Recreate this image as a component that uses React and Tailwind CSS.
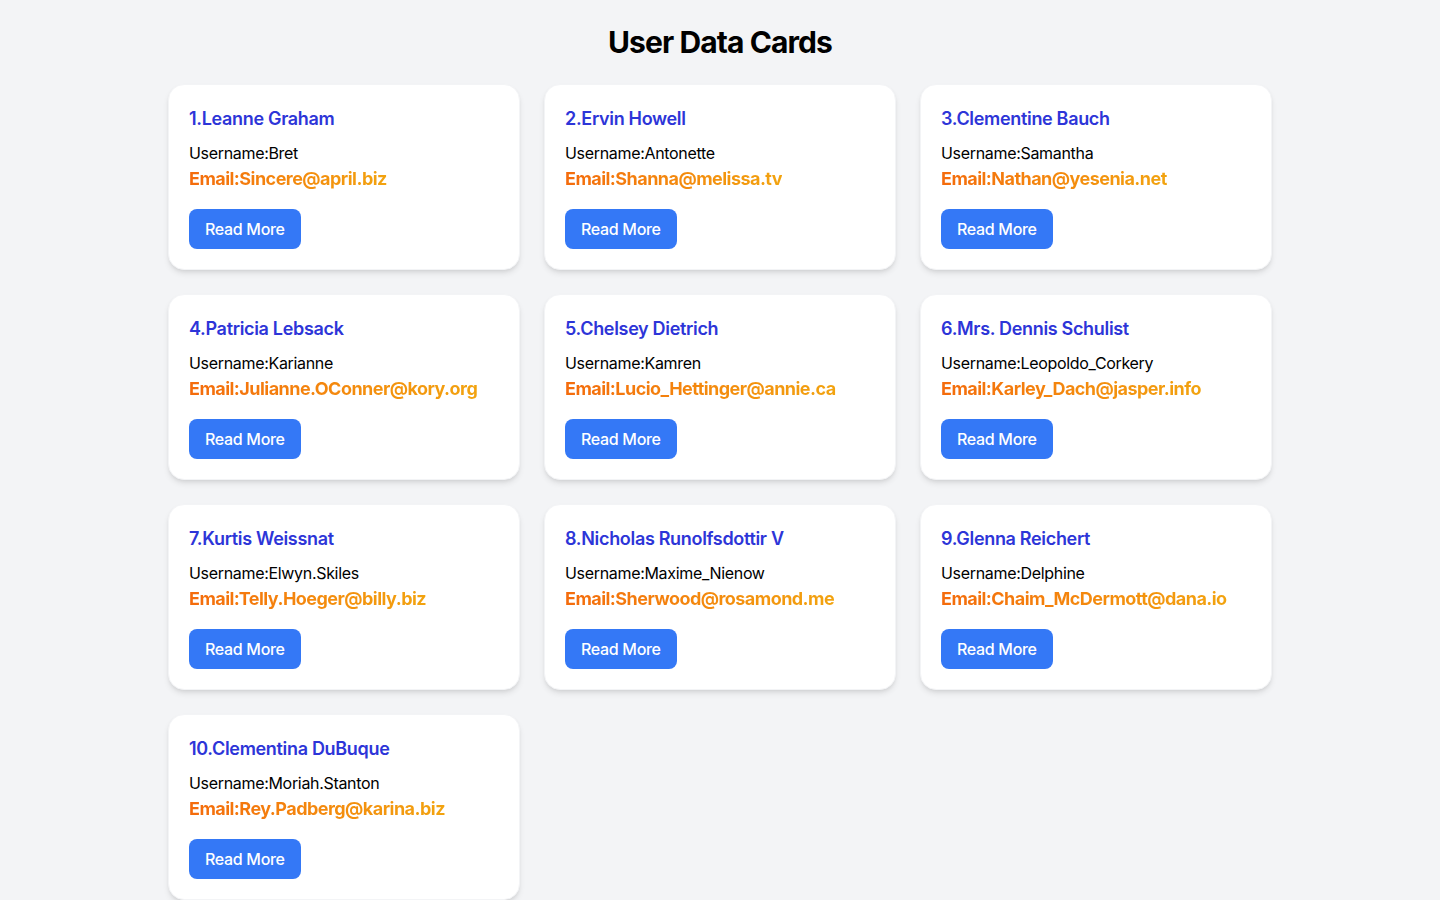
import React from "react";

const users = [
  { id: 1, name: "Leanne Graham", username: "Bret", email: "Sincere@april.biz" },
  { id: 2, name: "Ervin Howell", username: "Antonette", email: "Shanna@melissa.tv" },
  { id: 3, name: "Clementine Bauch", username: "Samantha", email: "Nathan@yesenia.net" },
  { id: 4, name: "Patricia Lebsack", username: "Karianne", email: "Julianne.OConner@kory.org" },
  { id: 5, name: "Chelsey Dietrich", username: "Kamren", email: "Lucio_Hettinger@annie.ca" },
  { id: 6, name: "Mrs. Dennis Schulist", username: "Leopoldo_Corkery", email: "Karley_Dach@jasper.info" },
  { id: 7, name: "Kurtis Weissnat", username: "Elwyn.Skiles", email: "Telly.Hoeger@billy.biz" },
  { id: 8, name: "Nicholas Runolfsdottir V", username: "Maxime_Nienow", email: "Sherwood@rosamond.me" },
  { id: 9, name: "Glenna Reichert", username: "Delphine", email: "Chaim_McDermott@dana.io" },
  { id: 10, name: "Clementina DuBuque", username: "Moriah.Stanton", email: "Rey.Padberg@karina.biz" },
];

function UserCard({ user }) {
  return (
    <div className="bg-white rounded-2xl border border-gray-100 shadow-md p-5">
      <h2 className="text-lg font-semibold text-[#2d35d8] mb-2">
        {user.id}.{user.name}
      </h2>
      <p className="text-base text-black">Username:{user.username}</p>
      <p className="text-lg font-bold tracking-[-0.03em] bg-gradient-to-r from-[#f46b0c] to-[#f2a30f] bg-clip-text text-transparent w-fit">
        Email:{user.email}
      </p>
      <button className="mt-4 bg-[#3478f6] text-white text-base font-medium px-4 py-2 rounded-lg hover:bg-blue-600">
        Read More
      </button>
    </div>
  );
}

export default function App() {
  return (
    <div className="min-h-screen bg-[#f3f4f6] font-['Inter',sans-serif] tracking-[-0.02em] py-6">
      <h1 className="text-3xl font-bold text-center text-black mb-6 tracking-[-0.03em]">User Data Cards</h1>
      <div className="max-w-6xl mx-auto px-6 grid grid-cols-3 gap-6">
        {users.map((user) => (
          <UserCard key={user.id} user={user} />
        ))}
      </div>
    </div>
  );
}
